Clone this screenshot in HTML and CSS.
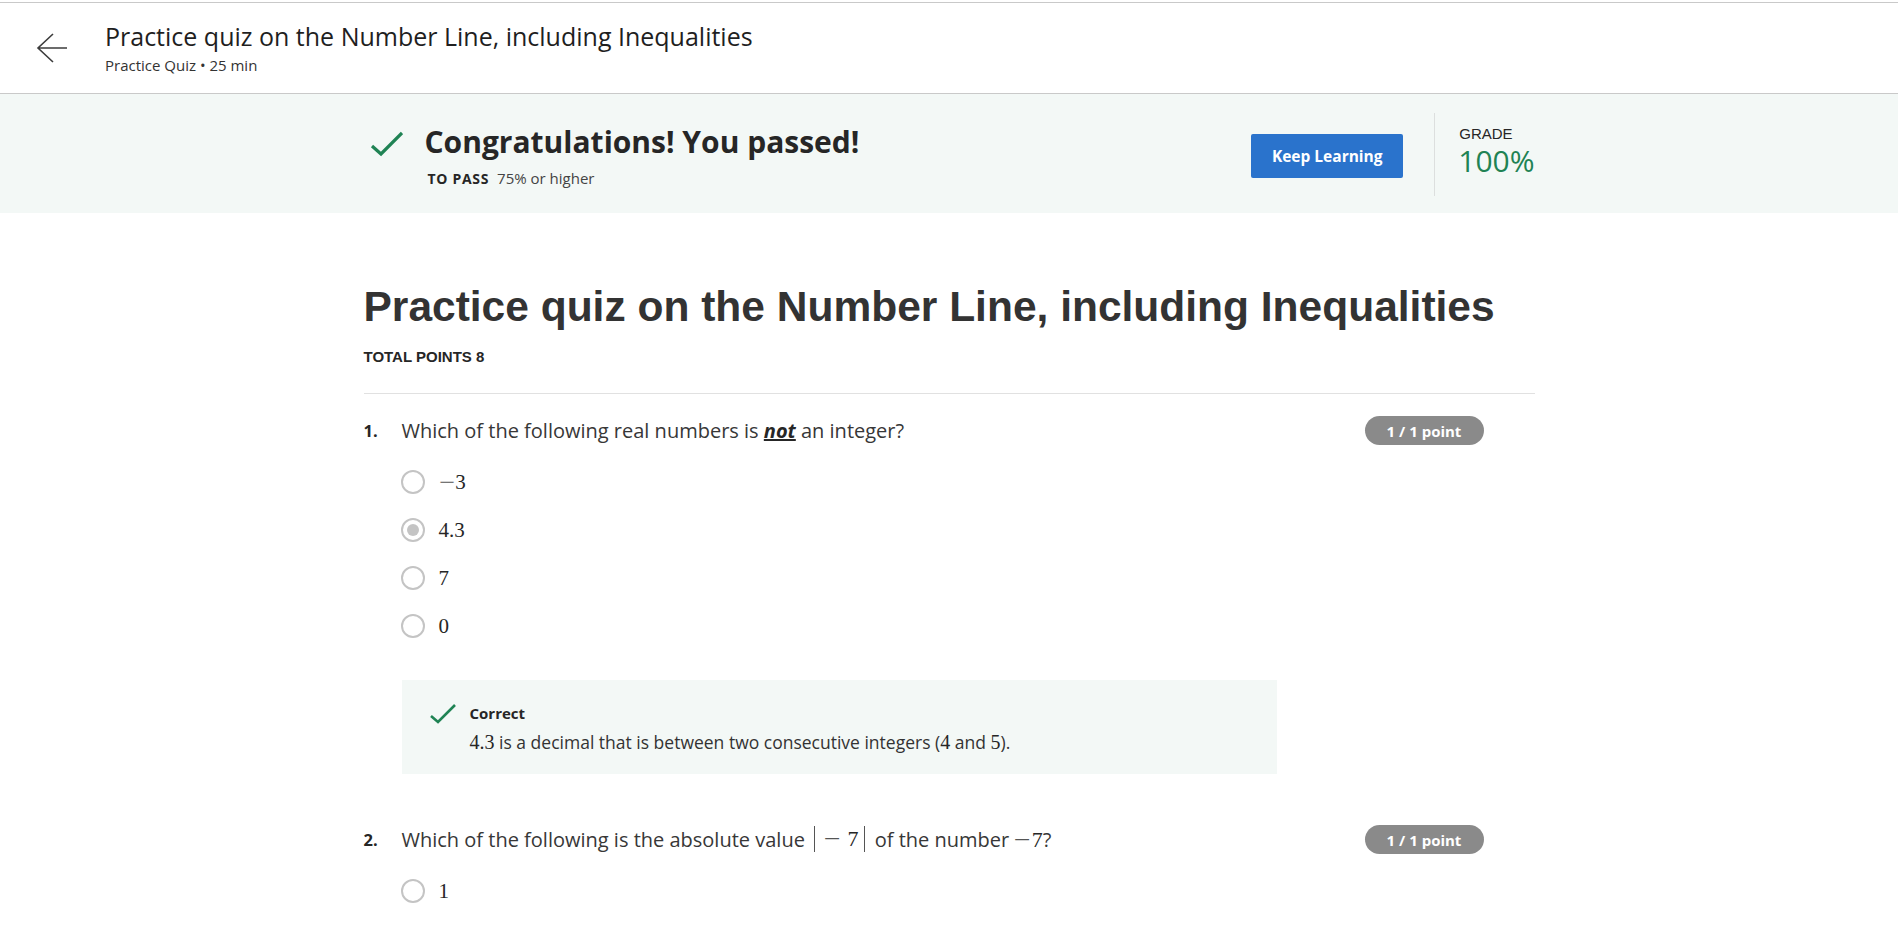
FILE: index.html
```html
<!DOCTYPE html>
<html lang="en">
<head>
<meta charset="utf-8">
<title>Practice quiz on the Number Line, including Inequalities</title>
<link rel="stylesheet" href="styles.css">
</head>
<body>
<header class="topbar">
  <svg class="back" width="32" height="32" viewBox="0 0 32 32" aria-hidden="true">
    <path d="M2 16 H31 M17 2 L2 16 L17 30" fill="none" stroke="#3c3c3c" stroke-width="1.6"/>
  </svg>
  <div class="topbar-text">
    <div class="topbar-title">Practice quiz on the Number Line, including Inequalities</div>
    <div class="topbar-sub">Practice Quiz • 25 min</div>
  </div>
</header>

<section class="banner">
  <div class="banner-inner">
    <div class="pass">
      <div class="pass-head">
        <svg width="34" height="26" viewBox="0 0 34 26" aria-hidden="true">
          <path d="M3 15 L12 23 L33 2" fill="none" stroke="#1f8354" stroke-width="3.2"/>
        </svg>
        <span class="pass-title">Congratulations! You passed!</span>
      </div>
      <div class="pass-sub"><span class="pass-label">TO PASS</span> 75% or higher</div>
    </div>
    <button class="btn">Keep Learning</button>
    <div class="divider"></div>
    <div class="grade">
      <div class="grade-label">GRADE</div>
      <div class="grade-value">100%</div>
    </div>
  </div>
</section>

<main class="content">
  <h1 class="quiz-title">Practice quiz on the Number Line, including Inequalities</h1>
  <div class="total">TOTAL POINTS 8</div>
  <hr class="rule">

  <div class="question">
    <div class="q-row">
      <span class="q-num">1.</span>
      <span class="q-text">Which of the following real numbers is <em class="not">not</em> an integer?</span>
      <span class="badge">1 / 1 point</span>
    </div>
    <div class="options">
      <div class="option"><span class="radio"></span><span class="math"><span class="minus">−</span>3</span></div>
      <div class="option"><span class="radio checked"></span><span class="math">4.3</span></div>
      <div class="option"><span class="radio"></span><span class="math">7</span></div>
      <div class="option"><span class="radio"></span><span class="math">0</span></div>
    </div>
    <div class="feedback">
      <svg class="fb-check" width="26" height="22" viewBox="0 0 26 22" aria-hidden="true">
        <path d="M1 13 L8 19 L25 2" fill="none" stroke="#1f8354" stroke-width="2.6"/>
      </svg>
      <div class="fb-body">
        <div class="fb-title">Correct</div>
        <div class="fb-text"><span class="math-in">4.3</span> is a decimal that is between two consecutive integers (<span class="math-in">4</span> and <span class="math-in">5</span>).</div>
      </div>
    </div>
  </div>

  <div class="question q2">
    <div class="q-row">
      <span class="q-num">2.</span>
      <span class="q-text">Which of the following is the absolute value <span class="math-in abs"><span class="bar"></span><span class="minus bin">−</span><span>7</span><span class="bar"></span></span> of the number <span class="math-in"><span class="minus">−</span>7</span>?</span>
      <span class="badge">1 / 1 point</span>
    </div>
    <div class="options">
      <div class="option"><span class="radio"></span><span class="math">1</span></div>
    </div>
  </div>
</main>
</body>
</html>
```

FILE: styles.css
```css
* { box-sizing: border-box; }

body {
  margin: 0;
  font-family: "Open Sans", "Noto Sans", sans-serif;
  color: #1f1f1f;
  background: #fff;
}

.topbar {
  margin-top: 2px;
  border-top: 1px solid #c9c9c9;
  border-bottom: 1px solid #c9c9c9;
  height: 92px;
  display: flex;
  align-items: flex-start;
  padding: 29px 0 0 36px;
}

.back { flex: none; margin-right: 37px; }

.topbar-text { margin-top: -13px; }

.topbar-title {
  font-size: 25px;
  line-height: 34px;
  color: #1f1f1f;
}

.topbar-sub {
  font-size: 15px;
  line-height: 20px;
  color: #333;
  margin-top: 2px;
}

.banner {
  background: #f3f8f6;
  height: 119px;
}

.banner-inner {
  width: 1171px;
  margin: 0 auto;
  display: flex;
  align-items: flex-start;
}

.pass {
  flex: 1;
  padding: 27px 0 0 5px;
}

.pass-head {
  display: flex;
  align-items: center;
  gap: 22px;
}

.pass-head svg { margin-top: 4px; }

.pass-title {
  font-size: 30px;
  line-height: 42px;
  font-weight: 700;
  color: #262626;
}

.pass-sub {
  margin: 5px 0 0 59px;
  font-size: 15px;
  line-height: 20px;
  color: #444;
}

.pass-label {
  font-weight: 700;
  font-size: 14px;
  letter-spacing: 0.7px;
  color: #262626;
  margin-right: 4px;
}

.btn {
  margin-top: 40px;
  height: 44px;
  width: 152px;
  border: none;
  border-radius: 2px;
  background: #2a73cc;
  color: #fff;
  font-family: "Open Sans", sans-serif;
  font-weight: 700;
  font-size: 15.5px;
  padding: 0;
}

.divider {
  margin: 19px 24px 0 31px;
  width: 1px;
  height: 83px;
  background: #dcdfde;
}

.grade { margin-top: 30px; }

.grade-label {
  font-family: "Liberation Sans", Arial, sans-serif;
  font-size: 15px;
  line-height: 20px;
  color: #262626;
}

.grade-value {
  font-size: 30px;
  line-height: 34px;
  color: #1f8354;
  margin-left: -1px;
}

.content {
  width: 1171px;
  margin: 0 auto;
}

.quiz-title {
  font-family: "Liberation Sans", Arial, sans-serif;
  font-weight: 700;
  font-size: 42.5px;
  line-height: 50px;
  color: #333;
  margin: 69px 0 0;
}

.total {
  font-family: "Liberation Sans", Arial, sans-serif;
  font-weight: 700;
  font-size: 15px;
  line-height: 20px;
  color: #262626;
  margin-top: 15px;
}

.rule {
  border: none;
  border-top: 1px solid #e1e1e1;
  margin: 26px 0 0;
}

.question { padding-top: 22px; }
.q2 { padding-top: 51px; }

.q-row {
  display: flex;
  align-items: center;
  min-height: 28px;
}

.q-num {
  width: 38px;
  flex: none;
  font-weight: 700;
  font-size: 16.5px;
  color: #262626;
}

.q-text {
  flex: 1;
  font-size: 20px;
  line-height: 28px;
  color: #373737;
}

.not {
  font-weight: 700;
  font-style: italic;
  text-decoration: underline;
  color: #262626;
}

.badge {
  flex: none;
  margin-right: 51px;
  height: 29px;
  width: 119px;
  border-radius: 15px;
  background: #8a8a8a;
  color: #fff;
  font-weight: 700;
  font-size: 15px;
  display: flex;
  align-items: center;
  justify-content: center;
}

.options {
  margin-top: 13px;
  padding-left: 37px;
}

.option {
  display: flex;
  align-items: center;
  height: 48px;
  gap: 14px;
}

.radio {
  width: 24px;
  height: 24px;
  border: 2px solid #c4c4c4;
  border-radius: 50%;
  display: flex;
  align-items: center;
  justify-content: center;
}

.radio.checked::after {
  content: "";
  width: 12px;
  height: 12px;
  border-radius: 50%;
  background: #c4c4c4;
}

.math {
  font-family: "Liberation Serif", "DejaVu Serif", serif;
  font-size: 21px;
  color: #262626;
}

.math-in {
  font-family: "Liberation Serif", "DejaVu Serif", serif;
  font-size: 22px;
  color: #262626;
}

.minus { display: inline-block; transform: scaleX(1.35); margin: 0 3px 0 2px; color: #555; }
.abs .minus.bin { margin: 0 9px 0 11px; }

.abs { display: inline-flex; align-items: center; margin: 0 5px 0 4px; vertical-align: -5px; }
.bar { display: inline-block; width: 1px; height: 26px; background: #555; }
.abs .bar:last-child { margin-left: 5px; }

.feedback {
  margin: 30px 0 0 38px;
  width: 875px;
  height: 94px;
  background: #f3f8f6;
  display: flex;
  align-items: flex-start;
  padding: 23px 0 0 28px;
  gap: 14px;
}

.fb-check { flex: none; }

.fb-title {
  font-weight: 700;
  font-size: 15px;
  line-height: 20px;
  color: #262626;
}

.fb-text {
  margin-top: 7px;
  font-size: 17.5px;
  line-height: 24px;
  color: #333;
}

.fb-text .math-in { font-size: 20px; }
```
